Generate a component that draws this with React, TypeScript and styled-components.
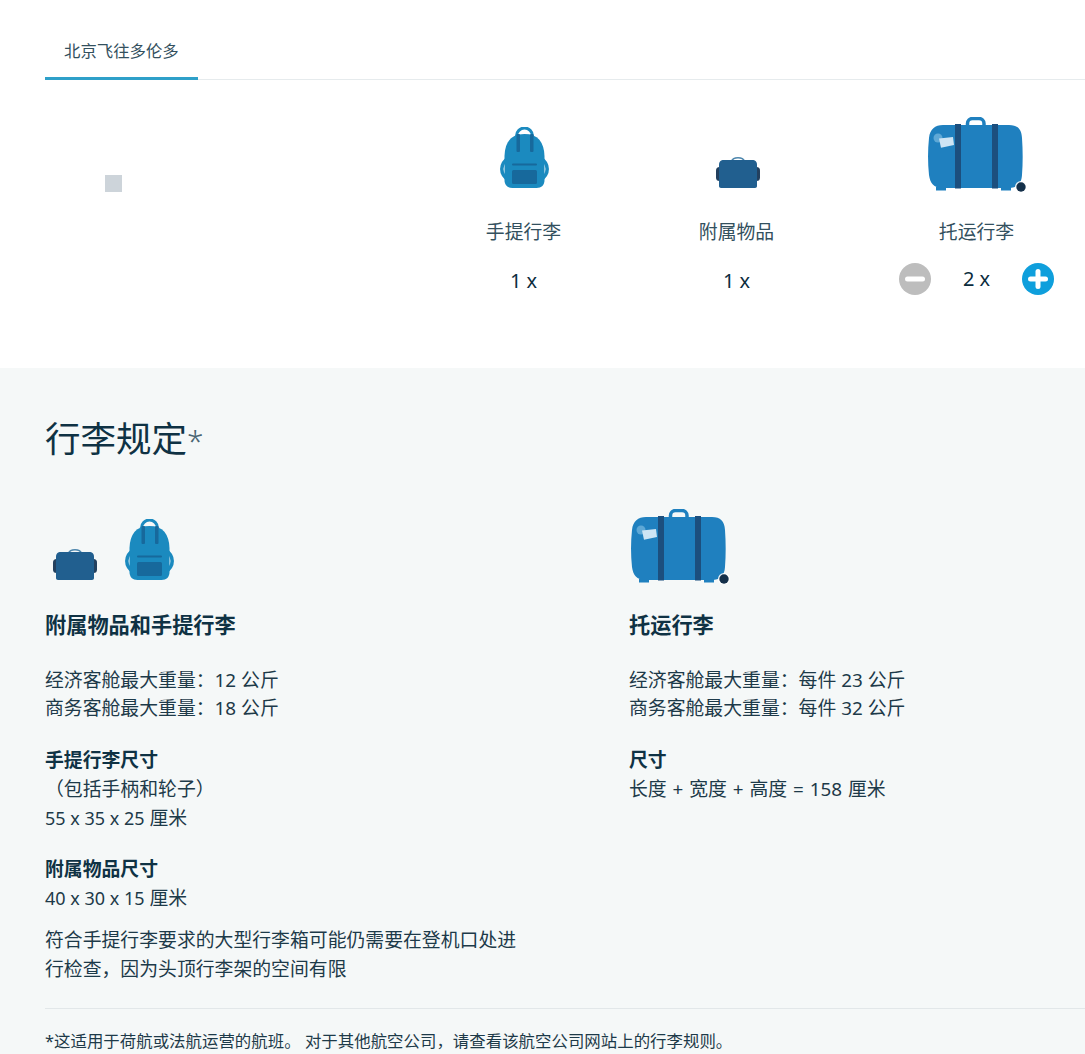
import styled, { createGlobalStyle } from "styled-components";

const GlobalStyle = createGlobalStyle`
  html, body {
    margin: 0;
    background: #fff;
    overflow-x: hidden;
  }
  body {
    font-family: "Noto Sans", "Noto Sans CJK SC", sans-serif;
    color: #1d3a49;
  }
`;

function Backpack() {
  return (
    <svg width={49} viewBox="0 0 49 61" aria-hidden="true">
      <path d="M16.500 13V9a8 8 0 0 1 16 0v4" fill="none" stroke="#1b8abf" strokeWidth="3" />
      <ellipse cx="24.500" cy="42" rx="22.700" ry="15.500" fill="none" stroke="#1b8abf" strokeWidth="3.500" />
      <path d="M24.500 7C11 7 5 15 4.500 29v24c0 5 3 8 8 8h24c5 0 8-3 8-8V29C44 15 38 7 24.500 7Z" fill="#1b8abf" />
      <rect x="16.500" y="7" width="3.500" height="18" rx="1" fill="#17699c" />
      <rect x="30" y="7" width="3.500" height="18" rx="1" fill="#17699c" />
      <rect x="12" y="36.500" width="25" height="2" rx="1" fill="#17699c" />
      <rect x="12" y="43" width="25" height="14" rx="1.500" fill="#17699c" />
    </svg>
  );
}

function SmallBag() {
  return (
    <svg width={44} viewBox="0 0 44 31" aria-hidden="true">
      <path d="M15.500 4.500C16.500 1.500 19 .8 22 .8s5.500.7 6.500 3.700" fill="none" stroke="#4d86ad" strokeWidth="1.500" />
      <rect x="0" y="10" width="44" height="14" rx="3.500" fill="#23405e" />
      <path d="M8 3h28c3.500 0 5 1.500 5 5v21c0 1.200-.8 2-2 2H5c-1.200 0-2-.8-2-2V8c0-3.500 1.500-5 5-5Z" fill="#215f8f" />
    </svg>
  );
}

function Suitcase() {
  return (
    <svg width={99} viewBox="0 0 99 75" aria-hidden="true">
      <path d="M39.500 9V6.500a5 5 0 0 1 5-5h6.500a5 5 0 0 1 5 5V9" fill="none" stroke="#1f80bf" strokeWidth="3.500" />
      <path d="M15 8h66c8.500 0 12.500 4 13 13 .9 13 .9 25 0 37-.5 9-5.500 13-13 13H14C6 71 2 66 1 58-.3 46-.3 33 1 21 2 12 7 8 15 8Z" fill="#1f80bf" />
      <rect x="8" y="70" width="10" height="3.500" fill="#1f80bf" />
      <rect x="73" y="70" width="10" height="3.500" fill="#1f80bf" />
      <rect x="27" y="7" width="6" height="64.500" fill="#1c4f7e" />
      <rect x="64" y="7" width="6" height="64.500" fill="#1c4f7e" />
      <circle cx="10" cy="21" r="4.500" fill="#5ea8d6" />
      <path d="M11 21.500 25 20l1 8-13 2.800Z" fill="#cde4f4" />
      <circle cx="93" cy="70" r="6" fill="#fff" opacity="0.9" />
      <circle cx="93" cy="70" r="4.700" fill="#14304a" />
    </svg>
  );
}

function RoundButton({ kind }: { kind: "minus" | "plus" }) {
  return (
    <CountButton $kind={kind} aria-label={kind}>
      <svg width="22" height="22" viewBox="0 0 22 22" aria-hidden="true">
        <rect x="1" y="8.500" width="20" height="5" rx="2.500" fill="#fff" />
        {kind === "plus" && <rect x="8.500" y="1" width="5" height="20" rx="2.500" fill="#fff" />}
      </svg>
    </CountButton>
  );
}

function App() {
  return (
    <Page>
      <GlobalStyle />
      <TabBar>
        <Tab>北京飞往多伦多</Tab>
      </TabBar>
      <Selector>
        <Placeholder />
        <BagColumn>
          <BagIcon $lift={4}><Backpack /></BagIcon>
          <BagLabel>手提行李</BagLabel>
          <Count>1 x</Count>
        </BagColumn>
        <BagColumn>
          <BagIcon $lift={4}><SmallBag /></BagIcon>
          <BagLabel>附属物品</BagLabel>
          <Count>1 x</Count>
        </BagColumn>
        <BagColumn>
          <BagIcon><Suitcase /></BagIcon>
          <BagLabel>托运行李</BagLabel>
          <Stepper>
            <RoundButton kind="minus" />
            <Count>2 x</Count>
            <RoundButton kind="plus" />
          </Stepper>
        </BagColumn>
      </Selector>
      <Rules>
        <Title>行李规定<TitleMark>*</TitleMark></Title>
        <RuleGrid>
          <RuleColumn>
            <RuleIcons $lift={4}>
              <SmallBagSlot><SmallBag /></SmallBagSlot>
              <Backpack />
            </RuleIcons>
            <RuleHeading>附属物品和手提行李</RuleHeading>
            <Block>
              经济客舱最大重量：12 公斤<br />
              商务客舱最大重量：18 公斤
            </Block>
            <Block>
              <strong>手提行李尺寸</strong><br />
              （包括手柄和轮子）<br />
              <Measure>55 x 35 x 25</Measure> 厘米
            </Block>
            <Block>
              <strong>附属物品尺寸</strong><br />
              <Measure>40 x 30 x 15</Measure> 厘米
            </Block>
            <Note>符合手提行李要求的大型行李箱可能仍需要在登机口处进行检查，因为头顶行李架的空间有限</Note>
          </RuleColumn>
          <RuleColumn>
            <RuleIcons $inset={2}><Suitcase /></RuleIcons>
            <RuleHeading>托运行李</RuleHeading>
            <Block>
              经济客舱最大重量：每件 23 公斤<br />
              商务客舱最大重量：每件 32 公斤
            </Block>
            <Block>
              <strong>尺寸</strong><br />
              <Formula>长度 + 宽度 + 高度 = 158 厘米</Formula>
            </Block>
          </RuleColumn>
        </RuleGrid>
        <Footnote>*这适用于荷航或法航运营的航班。 对于其他航空公司，请查看该航空公司网站上的行李规则。</Footnote>
      </Rules>
    </Page>
  );
}

const Page = styled.div`
  width: 1085px;
  height: 1054px;
  overflow: hidden;
`;

const TabBar = styled.div`
  display: flex;
  margin-left: 45px;
  height: 80px;
  box-sizing: border-box;
  padding-top: 3px;
  border-bottom: 1px solid #e6ebed;
`;

const Tab = styled.div`
  width: 153px;
  height: 77px;
  box-sizing: border-box;
  padding: 35px 0 0 19px;
  font-size: 16.4px;
  line-height: 26px;
  color: #33505e;
  border-bottom: 3px solid #2fa0c9;
`;

const Selector = styled.div`
  display: grid;
  grid-template-columns: 372px 213px 213px 267px;
  padding-left: 45px;
  height: 288px;
  box-sizing: border-box;
`;

const Placeholder = styled.div`
  width: 17px;
  height: 17px;
  margin: 95px 0 0 60px;
  background: #cdd4da;
`;

const BagColumn = styled.div`
  display: flex;
  flex-direction: column;
  align-items: center;
`;

const BagIcon = styled.div<{ $lift?: number }>`
  display: flex;
  align-items: flex-end;
  box-sizing: border-box;
  height: 112px;
  padding: 0 0 ${(p) => p.$lift ?? 0}px 2px;
  svg {
    display: block;
  }
`;

const BagLabel = styled.div`
  margin-top: 25px;
  font-size: 18.85px;
  line-height: 30px;
  color: #33505e;
`;

const Count = styled.div`
  margin-top: 19px;
  font-size: 20px;
  line-height: 30px;
  color: #0b2c3d;
  text-align: center;
`;

const Stepper = styled.div`
  display: flex;
  align-items: center;
  justify-content: space-between;
  width: 155px;
  height: 40px;
  margin-top: 12px;
  ${Count} {
    margin-top: 0;
  }
`;

const CountButton = styled.button<{ $kind: "minus" | "plus" }>`
  display: flex;
  align-items: center;
  justify-content: center;
  width: 32px;
  height: 32px;
  padding: 0;
  border: 0;
  border-radius: 50%;
  background: ${(p) => (p.$kind === "plus" ? "#0f9fdc" : "#bdbdbd")};
`;

const Rules = styled.div`
  height: 686px;
  box-sizing: border-box;
  padding: 44px 0 0 45px;
  background: #f5f8f8;
`;

const Title = styled.h1`
  margin: 0;
  font-size: 35.5px;
  font-weight: 400;
  line-height: 52px;
  color: #0f3244;
`;

const TitleMark = styled.span`
  font-size: 30px;
  font-weight: 300;
  color: #4a6572;
`;

const RuleGrid = styled.div`
  display: grid;
  grid-template-columns: 584px 1fr;
  margin-top: 54px;
  height: 487px;
  border-bottom: 1px solid #e2e7e9;
`;

const RuleColumn = styled.div`
  display: flex;
  flex-direction: column;
`;

const RuleIcons = styled.div<{ $lift?: number; $inset?: number }>`
  display: flex;
  align-items: flex-end;
  gap: 28px;
  box-sizing: border-box;
  height: 63px;
  padding: 0 0 ${(p) => p.$lift ?? 0}px ${(p) => p.$inset ?? 0}px;
  svg {
    display: block;
  }
`;

const SmallBagSlot = styled.div`
  padding-left: 8px;
`;

const RuleHeading = styled.h2`
  margin: 26px 0 0;
  font-size: 21.2px;
  font-weight: 700;
  line-height: 30px;
  color: #0f3244;
`;

const Block = styled.p`
  margin: 23px 0 0;
  width: 480px;
  font-size: 18.85px;
  line-height: 28.75px;
  color: #1d3a49;
  ${RuleHeading} + & {
    margin-top: 25.5px;
  }
  strong {
    color: #0f3244;
    font-weight: 700;
  }
`;

const Measure = styled.span`
  font-size: 18px;
`;

const Formula = styled.span`
  word-spacing: 1px;
`;

const Note = styled(Block)`
  margin-top: 13px;
`;

const Footnote = styled.div`
  margin-top: 19px;
  font-size: 16.45px;
  line-height: 26px;
  color: #1d3a49;
`;

export default App;
